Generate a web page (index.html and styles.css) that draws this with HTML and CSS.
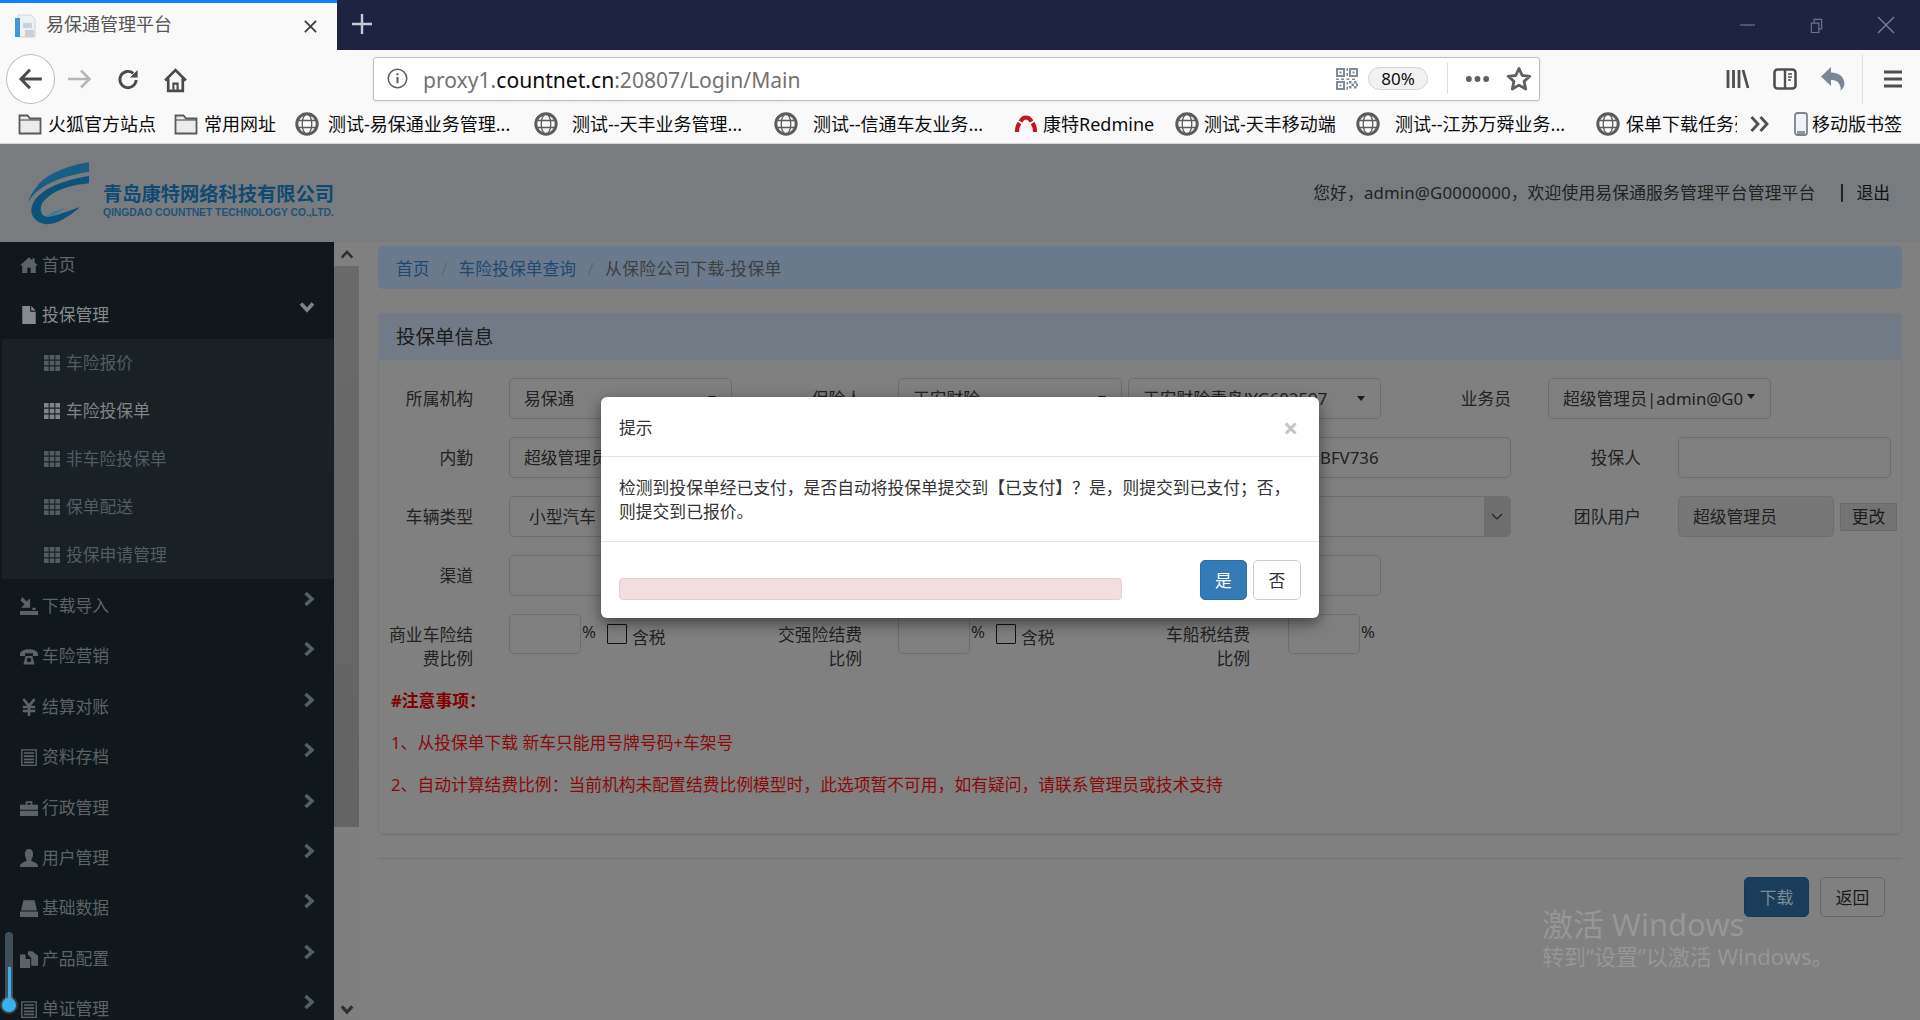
FILE: index.html
```html
<!DOCTYPE html>
<html lang="zh-CN">
<head>
<meta charset="utf-8">
<title>易保通管理平台</title>
<link rel="stylesheet" href="styles.css">
</head>
<body>
<svg class="defs" aria-hidden="true">
  <symbol id="i-home" viewBox="0 0 16 16"><path d="M8 1 0 8.5h2V15h4.5v-4.5h3V15H14V8.5h2L13 5.7V2h-2v1.8z"/></symbol>
  <symbol id="i-file" viewBox="0 0 16 16"><path d="M2 0h7v5h5v11H2zM10 0l4 4h-4z"/></symbol>
  <symbol id="i-import" viewBox="0 0 16 16"><path d="M0 12.5h16V16H0zM2 0l4 4 3-3v8.5H1l3-3L.5 3z"/><path d="M11 9.5h3v2h-3z"/></symbol>
  <symbol id="i-phone" viewBox="0 0 16 16"><path fill-rule="evenodd" d="M0 6.5C0 .5 16 .5 16 6.5V8h-4.5V5.5h-7V8H0zM3 15.5 5 8h6l2 7.5zM8 9.5a2 2 0 1 0 0 4 2 2 0 0 0 0-4z"/></symbol>
  <symbol id="i-yen" viewBox="0 0 16 16"><path d="M3 1l5 6 5-6M8 7v9M2.500 8h11M2.500 11.500h11" fill="none" stroke="currentColor" stroke-width="2.300"/></symbol>
  <symbol id="i-list" viewBox="0 0 16 16"><path fill-rule="evenodd" d="M1 1h14v15H1zM2.200 2.200v12.600h11.600V2.200zM3.500 3.700h9v1.500h-9zM3.500 6.500h9V8h-9zM3.500 9.300h9v1.500h-9zM3.500 12h9v1.500h-9z"/></symbol>
  <symbol id="i-case" viewBox="0 0 16 16"><path d="M0 5h16v4.500H0zM0 10.500h16V15H0zM5 5V2h6v3H9.500V3.500h-3V5z"/></symbol>
  <symbol id="i-user" viewBox="0 0 16 16"><path d="M8 0c3 0 4 3 3.500 6-.4 2-1.500 3.500-1.500 4 0 1 6 2 6 5v1H0v-1c0-3 6-4 6-5 0-.5-1.100-2-1.500-4C4 3 5 0 8 0z"/></symbol>
  <symbol id="i-hdd" viewBox="0 0 16 16"><path d="M3 1h10l2 9.200H1zM0 11.200h16V16H0z"/></symbol>
  <symbol id="i-copy" viewBox="0 0 16 16"><path d="M7 1h4l5 4v9h-6V7L7 4zM0 4h5v4h4v8H0z"/></symbol>
  <symbol id="i-grid" viewBox="0 0 16 16"><path d="M0 0h4.600v4.600H0zM5.700 0h4.600v4.600H5.700zM11.400 0H16v4.600h-4.600zM0 5.700h4.600v4.600H0zM5.700 5.700h4.600v4.600H5.700zM11.400 5.700H16v4.600h-4.600zM0 11.400h4.600V16H0zM5.700 11.400h4.600V16H5.700zM11.400 11.400H16V16h-4.600z"/></symbol>
  <symbol id="i-right" viewBox="0 0 12 16"><path d="M2.500 2 9 8l-6.500 6" fill="none" stroke="currentColor" stroke-width="3.600"/></symbol>
  <symbol id="i-down" viewBox="0 0 16 12"><path d="M2 2.500 8 9l6-6.500" fill="none" stroke="currentColor" stroke-width="3.600"/></symbol>
  <symbol id="i-up" viewBox="0 0 16 12"><path d="M2 9.500 8 3l6 6.500" fill="none" stroke="currentColor" stroke-width="3"/></symbol>
  <symbol id="i-globe" viewBox="0 0 24 24"><g fill="none" stroke="currentColor"><circle cx="12" cy="12" r="10.200" stroke-width="3"/><ellipse cx="12" cy="12" rx="4.800" ry="10" stroke-width="1.300"/><path d="M2.500 8.500h19M2.500 15.500h19" stroke-width="1.300"/></g></symbol>
  <symbol id="i-folder" viewBox="0 0 24 24"><path d="M1.500 3.500h8l2.500 3h10.500v15h-21z" fill="#ececec" stroke="#5a5a5a" stroke-width="1.800"/><path d="M2 8h20" stroke="#5a5a5a" stroke-width="1.200"/></symbol>
</svg>

<div class="tabstrip">
  <div class="tab">
    <svg class="favicon" viewBox="0 0 24 24"><path d="M4 1h13l4 4v18H4z" fill="#eef1f4" stroke="#cdd3d9"/><path d="M1 4h5v19H1z" fill="#3f97dd"/><path d="M9 9h9v5H9zM11 16h9v7h-9z" fill="#c9d2da"/></svg>
    <span class="tab-title">易保通管理平台</span>
    <svg class="tab-close" viewBox="0 0 16 16"><path d="M2 2l12 12M14 2 2 14" stroke="#3c3c3c" stroke-width="1.900" fill="none"/></svg>
  </div>
  <svg class="newtab" viewBox="0 0 22 22"><path d="M11 1v20M1 11h20" stroke="#c8cad2" stroke-width="2.400" fill="none"/></svg>
  <div class="winctl">
    <svg class="win-min" viewBox="0 0 16 16"><path d="M0 8h16" stroke="#6d7082" stroke-width="1.400"/></svg>
    <svg class="win-max" viewBox="0 0 16 16"><path d="M2.500 5.500h8v10h-8zM5.500 5.500v-4h8v10h-3" fill="none" stroke="#6d7082" stroke-width="1.300"/></svg>
    <svg class="win-close" viewBox="0 0 18 18"><path d="M1 1l16 16M17 1 1 17" stroke="#7c7f90" stroke-width="1.400"/></svg>
  </div>
</div>

<div class="toolbar">
  <div class="backbtn"><svg viewBox="0 0 24 24"><path d="M22 12H3M11 3.500 2.800 12l8.200 8.500" fill="none" stroke="#4a4a4f" stroke-width="2.800"/></svg></div>
  <svg class="tb-forward" viewBox="0 0 26 24"><path d="M1 12h22M14 3.500l8.500 8.500-8.500 8.500" fill="none" stroke="#b6b6b8" stroke-width="2.600"/></svg>
  <svg class="tb-reload" viewBox="0 0 24 24"><path d="M20 12a8.500 8.500 0 1 1-3-7" fill="none" stroke="#4a4a4f" stroke-width="3"/><path d="M21.500 1.500V9.500H13.500z" fill="#4a4a4f"/></svg>
  <svg class="tb-home" viewBox="0 0 24 24"><path d="M2 12 12 2l10 10M5 10v12h14V10" fill="none" stroke="#4a4a4f" stroke-width="2.600"/><path d="M10 22v-7h4v7" fill="none" stroke="#4a4a4f" stroke-width="2"/></svg>
  <div class="urlbar">
    <svg class="url-info" viewBox="0 0 20 20"><circle cx="10" cy="10" r="8.800" fill="none" stroke="#5f5f62" stroke-width="1.500"/><path d="M10 8.500v6M10 5v2" stroke="#5f5f62" stroke-width="2" fill="none"/></svg>
    <div class="url-text">proxy1.<b class="url-host">countnet.cn</b>:20807/Login/Main</div>
    <svg class="url-qr" viewBox="0 0 22 22"><path fill="#7f8b99" fill-rule="evenodd" d="M0 0h9v9H0zM2 2v5h5V2zM13 0h9v9h-9zM15 2v5h5V2zM0 13h9v9H0zM2 15v5h5v-5zM3.500 3.500h2v2h-2zM16.500 3.500h2v2h-2zM3.500 16.500h2v2h-2zM10.500 0h1.500v3h-1.500zM10.500 5h1.500v3h-1.500zM0 10.500h3V12H0zM5 10.500h3V12H5zM10.500 10.500h3V12h-3zM16 10.500h3V12h-3zM13 13h2.500v2.500H13zM18 13h2.500v2.500H18zM15.500 15.500H18V18h-2.500zM20 15.500h2V18h-2zM13 18h2.500v2.500H13zM18 18h2.500v2.500H18zM10.500 14h1.500v2.500h-1.500zM10.500 18.500h1.500V22h-1.500z"/></svg>
    <div class="url-zoom">80%</div>
    <div class="url-sep"></div>
    <svg class="url-dots" viewBox="0 0 26 8"><circle cx="4" cy="4" r="3" fill="#5f5f62"/><circle cx="13" cy="4" r="3" fill="#5f5f62"/><circle cx="22" cy="4" r="3" fill="#5f5f62"/></svg>
    <svg class="url-star" viewBox="0 0 26 26"><path d="M13 2.500l3.200 7 7.600.8-5.700 5.100 1.600 7.600-6.700-3.900-6.700 3.900 1.600-7.600-5.700-5.100 7.600-.8z" fill="none" stroke="#5f5f62" stroke-width="2.800" stroke-linejoin="round"/></svg>
  </div>
  <svg class="tb-lib" viewBox="0 0 24 24"><path d="M2 3v18M7.500 3v18M13 3v18M17 3l5 18" fill="none" stroke="#4f4f52" stroke-width="2.800"/></svg>
  <svg class="tb-side" viewBox="0 0 24 24"><rect x="1.500" y="2.500" width="21" height="19" rx="3" fill="none" stroke="#4f4f52" stroke-width="2.600"/><path d="M12 3v18" stroke="#4f4f52" stroke-width="2.400"/><path d="M15 7h4M15 10h4M15 13h3" stroke="#4f4f52" stroke-width="1.500"/></svg>
  <svg class="tb-undo" viewBox="0 0 24 26"><path d="M10 1 0 10.500 10 20v-6c5 0 8 2 9 6 1 2 1 3 0 5 4-3 5-6 4-10-1-5-6-8.500-13-8.500z" fill="#7a8694"/></svg>
  <div class="tb-sep"></div>
  <svg class="tb-menu" viewBox="0 0 18 20"><path d="M0 3h18M0 10h18M0 17h18" stroke="#4f4f52" stroke-width="3"/></svg>
</div>

<div class="bookmarks">
  <div class="bm bm-1"><svg class="bm-icon"><use href="#i-folder"/></svg><span>火狐官方站点</span></div>
  <div class="bm bm-2"><svg class="bm-icon"><use href="#i-folder"/></svg><span>常用网址</span></div>
  <div class="bm bm-3"><svg class="bm-icon globe"><use href="#i-globe"/></svg><span>测试-易保通业务管理...</span></div>
  <div class="bm bm-4"><svg class="bm-icon globe"><use href="#i-globe"/></svg><span>测试--天丰业务管理...</span></div>
  <div class="bm bm-5"><svg class="bm-icon globe"><use href="#i-globe"/></svg><span>测试--信通车友业务...</span></div>
  <div class="bm bm-6"><svg class="bm-icon" viewBox="0 0 24 24"><path d="M3 20c0-4 1-7 2.500-9M6.500 9.500C8 6.500 10 5.500 12 5.500s4 1 5.500 4M18.500 11c1.500 2 2.500 5 2.500 9" fill="none" stroke="#c4141c" stroke-width="4.200"/></svg><span>康特Redmine</span></div>
  <div class="bm bm-7"><svg class="bm-icon globe"><use href="#i-globe"/></svg><span>测试-天丰移动端</span></div>
  <div class="bm bm-8"><svg class="bm-icon globe"><use href="#i-globe"/></svg><span>测试--江苏万舜业务...</span></div>
  <div class="bm bm-9"><svg class="bm-icon globe"><use href="#i-globe"/></svg><span class="bm-clip">保单下载任务列表</span></div>
  <svg class="bm-more" viewBox="0 0 20 20"><path d="M2 3l6.500 7L2 17M11 3l6.500 7-6.500 7" fill="none" stroke="#4f4f52" stroke-width="2.800"/></svg>
  <div class="bm bm-mobile"><svg class="bm-phone" viewBox="0 0 14 24"><rect x="1" y="1" width="12" height="22" rx="2.500" fill="#f2f3f5" stroke="#7b8590" stroke-width="1.800"/><rect x="3" y="19" width="8" height="3" fill="#8d97a3"/></svg><span>移动版书签</span></div>
</div>

<div class="page">
  <header class="site-header">
    <svg class="logo" viewBox="0 0 210 228">
      <path d="M207 22C150 30 80 55 50 95 38 110 28 125 25 142 45 105 90 70 207 50z" fill="#1a5d84"/>
      <path d="M207 63C130 75 70 100 45 135 28 160 30 185 55 200 72 211 100 210 125 195 145 185 165 170 180 157 150 165 125 178 100 182 80 187 70 186 65 175 58 155 65 140 85 125 115 100 160 90 207 85z" fill="#0d5278"/>
      <path d="M74 187C88 176 110 165 135 158 118 175 95 184 74 187z" fill="#3d7a9c"/>
    </svg>
    <div class="brand">
      <div class="brand-cn">青岛康特网络科技有限公司</div>
      <div class="brand-en">QINGDAO COUNTNET TECHNOLOGY CO.,LTD.</div>
    </div>
    <div class="welcome">您好，admin@G0000000，欢迎使用易保通服务管理平台管理平台</div>
    <div class="logout"><span class="logout-bar"></span>退出</div>
  </header>

  <div class="main">
    <aside class="sidebar">
      <a class="nav-item nav-first"><svg class="nav-icon"><use href="#i-home"/></svg><span>首页</span></a>
      <a class="nav-item nav-open"><svg class="nav-icon"><use href="#i-file"/></svg><span>投保管理</span><svg class="chev-down"><use href="#i-down"/></svg></a>
      <div class="subnav">
        <a class="sub-item"><svg class="sub-icon"><use href="#i-grid"/></svg><span>车险报价</span></a>
        <a class="sub-item sub-active"><svg class="sub-icon"><use href="#i-grid"/></svg><span>车险投保单</span></a>
        <a class="sub-item"><svg class="sub-icon"><use href="#i-grid"/></svg><span>非车险投保单</span></a>
        <a class="sub-item"><svg class="sub-icon"><use href="#i-grid"/></svg><span>保单配送</span></a>
        <a class="sub-item"><svg class="sub-icon"><use href="#i-grid"/></svg><span>投保申请管理</span></a>
      </div>
      <div class="nav-rest">
        <a class="nav-item"><svg class="nav-icon"><use href="#i-import"/></svg><span>下载导入</span><svg class="chev-right"><use href="#i-right"/></svg></a>
        <a class="nav-item"><svg class="nav-icon"><use href="#i-phone"/></svg><span>车险营销</span><svg class="chev-right"><use href="#i-right"/></svg></a>
        <a class="nav-item"><svg class="nav-icon"><use href="#i-yen"/></svg><span>结算对账</span><svg class="chev-right"><use href="#i-right"/></svg></a>
        <a class="nav-item"><svg class="nav-icon"><use href="#i-list"/></svg><span>资料存档</span><svg class="chev-right"><use href="#i-right"/></svg></a>
        <a class="nav-item"><svg class="nav-icon"><use href="#i-case"/></svg><span>行政管理</span><svg class="chev-right"><use href="#i-right"/></svg></a>
        <a class="nav-item"><svg class="nav-icon"><use href="#i-user"/></svg><span>用户管理</span><svg class="chev-right"><use href="#i-right"/></svg></a>
        <a class="nav-item"><svg class="nav-icon"><use href="#i-hdd"/></svg><span>基础数据</span><svg class="chev-right"><use href="#i-right"/></svg></a>
        <a class="nav-item"><svg class="nav-icon"><use href="#i-copy"/></svg><span>产品配置</span><svg class="chev-right"><use href="#i-right"/></svg></a>
        <a class="nav-item"><svg class="nav-icon"><use href="#i-list"/></svg><span>单证管理</span><svg class="chev-right"><use href="#i-right"/></svg></a>
      </div>
    </aside>
    <div class="scrollbar">
      <div class="scroll-btn"><svg class="scroll-chev"><use href="#i-up"/></svg></div>
      <div class="scroll-thumb"></div>
      <div class="scroll-track"><svg class="scroll-chev"><use href="#i-down"/></svg></div>
    </div>

    <main class="content">
      <nav class="crumbs">
        <a class="crumb-link">首页</a><span class="crumb-sep">/</span>
        <a class="crumb-link">车险投保单查询</a><span class="crumb-sep">/</span>
        <span class="crumb-now">从保险公司下载-投保单</span>
      </nav>
      <section class="panel">
        <div class="panel-head">投保单信息</div>
        <div class="form-grid">
          <label class="f-label c-a">所属机构</label>
          <div class="ctrl c-b">易保通<i class="caret"></i></div>
          <label class="f-label c-c">保险人</label>
          <div class="ctrl c-d">天安财险<i class="caret"></i></div>
          <div class="ctrl c-e">天安财险青岛JYG602597<i class="caret"></i></div>
          <label class="f-label c-f">业务员</label>
          <div class="ctrl c-g">超级管理员|admin@G0<i class="caret caret-near"></i></div>

          <label class="f-label c-a">内勤</label>
          <div class="ctrl c-b">超级管理员</div>
          <div class="ctrl c-h">BFV736</div>
          <label class="f-label c-i">投保人</label>
          <div class="ctrl c-j"></div>

          <label class="f-label c-a">车辆类型</label>
          <div class="ctrl ctrl-native c-k"><span class="native-text">小型汽车</span><span class="native-arrow"><svg viewBox="0 0 12 8"><path d="M1 1l5 5 5-5" fill="none" stroke="#222" stroke-width="1.200"/></svg></span></div>
          <label class="f-label c-i">团队用户</label>
          <div class="ctrl ctrl-off c-l">超级管理员</div>
          <button class="mini-btn c-m">更改</button>

          <label class="f-label c-a">渠道</label>
          <div class="ctrl c-n"></div>
        </div>

        <div class="ratio-row">
          <div class="ratio">
            <label class="ratio-label">商业车险结费比例</label>
            <div class="ctrl ratio-input"></div>
            <span class="pct">%</span>
            <i class="check"></i><span class="tax">含税</span>
          </div>
          <div class="ratio">
            <label class="ratio-label">交强险结费比例</label>
            <div class="ctrl ratio-input"></div>
            <span class="pct">%</span>
            <i class="check"></i><span class="tax">含税</span>
          </div>
          <div class="ratio">
            <label class="ratio-label">车船税结费比例</label>
            <div class="ctrl ratio-input"></div>
            <span class="pct">%</span>
          </div>
        </div>

        <div class="notes">
          <p class="note-title">#注意事项：</p>
          <p>1、从投保单下载 新车只能用号牌号码+车架号</p>
          <p>2、自动计算结费比例：当前机构未配置结费比例模型时，此选项暂不可用，如有疑问，请联系管理员或技术支持</p>
        </div>
      </section>
      <hr class="rule">
      <div class="actions">
        <button class="btn btn-dim-primary">下载</button>
        <button class="btn btn-dim">返回</button>
      </div>
    </main>
  </div>

  <div class="volume"><div class="volume-fill"></div><div class="volume-knob"></div></div>

  <div class="modal">
    <div class="modal-head"><span>提示</span><span class="modal-x">×</span></div>
    <div class="modal-body">检测到投保单经已支付，是否自动将投保单提交到【已支付】？是，则提交到已支付；否，则提交到已报价。</div>
    <div class="modal-foot">
      <div class="modal-alert"></div>
      <button class="btn btn-primary">是</button>
      <button class="btn btn-default">否</button>
    </div>
  </div>

  <div class="watermark">
    <div class="wm-big">激活 Windows</div>
    <div class="wm-small">转到“设置”以激活 Windows。</div>
  </div>
</div>
</body>
</html>
```
FILE: styles.css
```css
* { box-sizing: border-box; }
html, body { margin: 0; padding: 0; }
body {
  width: 1920px; height: 1020px; overflow: hidden;
  font-family: "Noto Sans", "Noto Sans CJK SC", sans-serif;
  font-size: 16.8px; line-height: 24px; color: #1a1a1a; background: #808080;
}
.defs { display: none; }
svg { display: block; flex: none; fill: currentColor; }

/* tab strip */
.tabstrip { height: 50px; background: #1f2342; display: flex; align-items: center; position: relative; }
.tab {
  width: 337px; height: 50px; background: #f9f9fa; border-top: 3px solid #0a84ff;
  display: flex; align-items: center; padding-left: 14px;
}
.favicon { width: 24px; height: 24px; margin-top: -2px; }
.tab-title { margin-left: 8px; margin-top: -5px; font-size: 18px; color: #555; }
.tab-close { width: 15px; height: 15px; margin-left: auto; margin-right: 19px; }
.newtab { width: 22px; height: 22px; margin-left: 14px; margin-top: -2px; }
.winctl { margin-left: auto; display: flex; align-items: center; }
.win-min { width: 15px; height: 16px; margin-right: 54px; }
.win-max { width: 15px; height: 15px; margin-right: 53px; }
.win-close { width: 18px; height: 18px; margin-right: 25px; }

/* toolbar */
.toolbar { height: 54px; padding-top: 4px; background: #f9f9fa; display: flex; align-items: center; }
.backbtn {
  width: 49px; height: 50px; margin-left: 6px; border: 1px solid #bdbdbf; border-radius: 50%;
  background: #fff; display: flex; align-items: center; justify-content: center;
}
.backbtn svg { width: 26px; height: 26px; }
.tb-forward { width: 26px; height: 24px; margin-left: 12px; }
.tb-reload { width: 23px; height: 24px; margin-left: 24px; margin-top: 2px; }
.tb-home { width: 25px; height: 25px; margin-left: 23px; margin-top: 2px; }
.urlbar {
  width: 1167px; height: 44px; margin-left: 185px; margin-top: -1px; background: #fff;
  border: 1px solid #c0c0c2; border-radius: 3px; box-shadow: 0 1px 3px rgba(0,0,0,.1);
  display: flex; align-items: center; padding-left: 13px;
}
.url-info { width: 21px; height: 21px; }
.url-text { margin-left: 15px; margin-top: 2px; font-size: 21.100px; color: #737373; white-space: nowrap; }
.url-host { font-weight: 400; color: #0c0c0d; }
.url-qr { width: 22px; height: 22px; margin-left: auto; }
.url-zoom {
  width: 60px; height: 23px; margin-left: 10px; border: 1px solid #d4d4d6; border-radius: 12px;
  background: #f2f2f3; font-size: 17px; line-height: 21px; text-align: center; color: #0c0c0d;
}
.url-sep { width: 1px; height: 31px; margin-left: 19px; background: #dcdcde; }
.url-dots { width: 25px; height: 8px; margin-left: 17px; }
.url-star { width: 26px; height: 26px; margin-left: 16px; margin-right: 7px; }
.tb-lib { width: 24px; height: 24px; margin-left: 186px; }
.tb-side { width: 24px; height: 24px; margin-left: 23px; }
.tb-undo { width: 24px; height: 26px; margin-left: 24px; }
.tb-sep { width: 1px; height: 50px; margin-left: 17px; background: #dedee0; }
.tb-menu { width: 18px; height: 20px; margin-left: 21px; }

/* bookmarks */
.bookmarks {
  height: 40px; background: #f9f9fa; border-bottom: 1px solid #d8d8da;
  display: flex; align-items: center; padding-left: 18px; font-size: 18px; color: #0c0c0d;
}
.bm { display: flex; align-items: center; flex: none; white-space: nowrap; overflow: hidden; }
.bm-icon { width: 24px; height: 24px; }
.globe { color: #5c5c5f; }
.bm-1 { width: 156px; gap: 6px; }
.bm-2 { width: 121px; gap: 6px; }
.bm-3 { width: 239px; gap: 9px; }
.bm-4 { width: 240px; gap: 14px; }
.bm-5 { width: 240px; gap: 15px; }
.bm-6 { width: 161px; gap: 5px; }
.bm-7 { width: 181px; gap: 5px; }
.bm-8 { width: 240px; gap: 15px; }
.bm-9 { width: 153px; gap: 6px; }
.bm-clip { width: 111px; overflow: hidden; }
.bm-more { width: 21px; height: 20px; margin-right: 24px; }
.bm-phone { width: 14px; height: 24px; }
.bm-mobile { gap: 4px; }

/* page */
.page { position: relative; height: 876px; overflow: hidden; }
.site-header { height: 98px; background: #797c7f; display: flex; align-items: center; padding-left: 20px; }
.logo { width: 70px; height: 76px; }
.brand { margin-left: 13px; margin-top: 14px; }
.brand-cn { font-size: 19.250px; line-height: 25px; font-weight: 700; color: #0f4a70; white-space: nowrap; }
.brand-en { font-family: "Liberation Sans", sans-serif; font-size: 10.300px; line-height: 14px; font-weight: 700; color: #1c5478; white-space: nowrap; }
.welcome { margin-left: auto; white-space: nowrap; color: #222; letter-spacing: .15px; }
.logout { display: flex; align-items: center; margin-left: 26px; margin-right: 30px; color: #111; }
.logout-bar { width: 2px; height: 18px; background: #222; margin-right: 13px; }

.main { display: flex; height: 778px; }
.sidebar { width: 334px; background: #11181c; color: #5c6367; flex: none; overflow: hidden; height: 778px; }
.nav-item { display: flex; align-items: center; height: 50.400px; padding-left: 20px; white-space: nowrap; }
.nav-item.nav-first { height: 49.400px; padding-bottom: 4px; }
.nav-item.nav-open { height: 48px; color: #858a8c; }
.nav-icon { width: 18px; height: 18px; margin-right: 4px; }
.chev-right { width: 12px; height: 16px; margin-left: auto; margin-right: 19px; margin-bottom: 14px; color: #555f65; }
.chev-down { width: 16px; height: 12px; margin-left: auto; margin-right: 19px; margin-bottom: 16px; color: #7e8487; }
.subnav { background: #192125; margin-left: 2px; height: 240px; }
.sub-item { display: flex; align-items: center; height: 48px; padding-left: 42px; color: #515c63; }
.sub-icon { width: 16px; height: 16px; margin-right: 6px; }
.sub-active { color: #808486; }
.nav-rest { padding-top: 1.500px; }

.scrollbar { width: 25px; flex: none; display: flex; flex-direction: column; background: #7f7f7f; }
.scroll-btn { height: 24px; display: flex; align-items: center; justify-content: center; background: #808080; }
.scroll-chev { width: 14px; height: 11px; color: #2f2f2f; }
.scroll-thumb { height: 561px; background: linear-gradient(#6a6a6a, #646464); }
.scroll-track { flex: 1; display: flex; align-items: flex-end; justify-content: center; padding-bottom: 5px; }

.content { flex: 1; min-width: 0; background: #808080; padding: 4px 18px 0 19px; }
.crumbs {
  height: 43px; border-radius: 5px; background: #6a798c; padding: 2px 0 0 18px;
  display: flex; align-items: center; white-space: nowrap;
}
.crumb-link { color: #1e4a72; }
.crumb-sep { width: 29px; text-align: center; color: #666; }
.crumb-now { color: #3f3f3f; letter-spacing: .3px; }

.panel { margin-top: 24px; border: 1px solid #7a7c80; border-radius: 5px; padding-bottom: 36px; box-shadow: 0 1px 1px rgba(60,70,90,.25); }
.panel-head { height: 46px; background: #727a86; padding-left: 17px; font-size: 19.500px; line-height: 46px; color: #1c1c1c; border-radius: 4px 4px 0 0; }
.form-grid {
  display: grid; padding-top: 18px; row-gap: 18px; grid-auto-rows: 41px;
  grid-template-columns: 94px 36px 223px 130px 36px 224px 6px 253px 130px 37px 93px 37px 93px 63px 6px 51px 6px;
}
.f-label { display: flex; align-items: center; justify-content: flex-end; white-space: nowrap; color: #222; padding-top: 1px; }
.ctrl {
  display: flex; align-items: center; height: 41px; padding: 1px 14px 0; white-space: nowrap; overflow: hidden;
  border: 1px solid #6e6e6e; border-radius: 5px; color: #222; position: relative;
}
.c-a { grid-column: 1 / 2; }
.c-b { grid-column: 3 / 4; }
.c-c { grid-column: 4 / 5; }
.c-d { grid-column: 6 / 7; }
.c-e { grid-column: 8 / 9; }
.c-f { grid-column: 9 / 10; }
.c-g { grid-column: 11 / 14; }
.c-h { grid-column: 8 / 10; padding-left: 191px; }
.c-i { grid-column: 10 / 12; }
.c-j { grid-column: 13 / 17; }
.c-k { grid-column: 3 / 10; }
.c-l { grid-column: 13 / 15; }
.c-m { grid-column: 16 / 18; align-self: center; }
.c-n { grid-column: 3 / 9; }
.caret {
  position: absolute; right: 15px; top: 17px; width: 0; height: 0;
  border-left: 4px solid transparent; border-right: 4px solid transparent; border-top: 5px solid #1a1a1a;
}
.caret-near { right: 15px; top: 15px; }
.ctrl-native { padding: 0 0 0 19px; }
.native-text { flex: 1; }
.native-arrow {
  width: 26px; height: 100%; background: #6e6e6e; display: flex; align-items: center; justify-content: center;
}
.native-arrow svg { width: 12px; height: 8px; }
.ctrl-off { background: #777; }
.mini-btn {
  height: 28px; padding: 0; border: 1px solid #6a6a6a; background: #737373; font: inherit; line-height: 24px; color: #1c1c1c;
}

.ratio-row { display: flex; margin-top: 18px; height: 57px; }
.ratio { width: 388px; display: flex; align-items: flex-start; flex: none; }
.ratio-label { width: 94px; margin-top: 9px; margin-right: 36px; text-align: right; color: #222; flex: none; }
.ratio:nth-child(n+2) .ratio-label { width: 95px; }
.ratio:nth-child(3) .ratio-label { margin-right: 38px; }
.ratio-input { width: 72px; height: 40px; flex: none; }
.pct { margin-left: 1px; margin-top: 6px; width: 14px; color: #222; }
.check { width: 20px; height: 20px; margin-left: 11px; margin-top: 10px; border: 1px solid #111; border-radius: 1px; flex: none; }
.tax { margin-left: 5px; margin-top: 12px; color: #222; }

.notes { padding-left: 12px; margin-top: 18px; color: #8a0a0a; }
.notes p { margin: 0 0 18px; white-space: nowrap; }
.notes p:last-child { margin-bottom: 0; }
.note-title { font-weight: 700; color: #820000; }

.rule { margin: 24px 0 0; border: 0; border-top: 1px solid #727272; }
.actions { display: flex; justify-content: flex-end; gap: 11px; margin-top: 18px; padding-right: 17px; }
.btn { width: 65px; height: 40px; padding: 1px 0 0; border-radius: 5px; font: inherit; text-align: center; }
.btn-dim-primary { background: #1a3d5c; border: 1px solid #183a57; color: #7d8b95; }
.btn-dim { background: transparent; border: 1px solid #666; color: #1a1a1a; }

/* things above the dimmed page */
.volume { position: absolute; left: 5px; top: 788px; width: 8px; height: 80px; border-radius: 4px; background: #3f4e59; }
.volume-fill { position: absolute; left: 2.500px; top: 35px; width: 3px; height: 40px; background: #39b2ea; }
.volume-knob { position: absolute; left: -3px; top: 66px; width: 14px; height: 14px; border-radius: 50%; background: #39b2ea; box-shadow: 0 0 0 2px rgba(120,140,150,.35); }

.modal {
  position: absolute; left: 601px; top: 253px; width: 718px; height: 221px;
  background: #fff; border-radius: 6px; box-shadow: 0 5px 15px rgba(0,0,0,.5); color: #333;
}
.modal-head {
  height: 60px; padding: 2px 18px 0; border-bottom: 1px solid #e5e5e5;
  display: flex; align-items: center; justify-content: space-between;
}
.modal-x { font-size: 26px; color: #c4c4c4; font-weight: 700; margin-right: 3px; }
.modal-body { height: 85px; padding: 19px 18px 0; border-bottom: 1px solid #e5e5e5; }
.modal-foot { display: flex; align-items: flex-start; padding: 18px 18px 0; }
.modal-alert { width: 503px; height: 22px; margin-top: 18px; margin-right: 78px; background: #f2dede; border: 1px solid #ebccd1; border-radius: 4px; }
.modal-foot .btn { width: 47px; }
.btn-primary { background: #337ab7; border: 1px solid #2e6da4; color: #fff; }
.btn-default { width: 48px !important; margin-left: 6px; background: #fff; border: 1px solid #ccc; color: #333; }

.watermark { position: absolute; left: 1542px; top: 762px; color: rgba(255,255,255,.19); white-space: nowrap; }
.wm-big { font-size: 31px; line-height: 36px; }
.wm-small { font-size: 22px; line-height: 28px; }
```
